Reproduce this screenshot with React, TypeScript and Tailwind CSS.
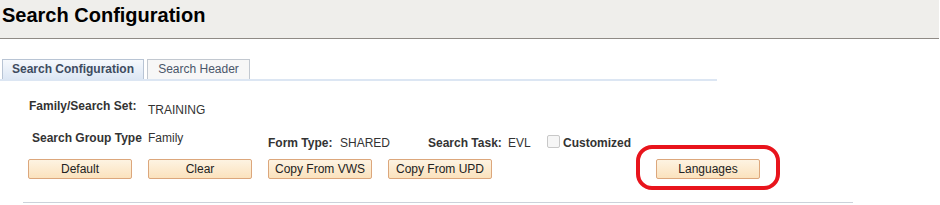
import React from "react";

const font = { fontFamily: '"Liberation Sans", Arial, sans-serif' };

function Btn({ children }: { children: React.ReactNode }) {
  return (
    <button className="w-[104px] h-[20px] rounded-[2px] border border-[#dca77c] bg-gradient-to-b from-[#fdf3e2] to-[#fbe2bd] text-[12px] leading-[18px] text-[#222] text-center">
      {children}
    </button>
  );
}

export default function App() {
  return (
    <div style={font} className="w-[940px] h-[205px] bg-white overflow-hidden text-[#333]">
      <div className="h-[39px] bg-[#efeeeb] border-b border-[#8f8a85] w-[939px]">
        <div className="pl-[2px] pt-[4px] text-[20px] leading-[23px] font-bold text-black">Search Configuration</div>
      </div>
      <div className="mt-[20px] ml-0 w-[717px] border-b-[2px] border-[#dce6f3] flex items-end pl-[2px] gap-[3px]">
        <div className="w-[142px] h-[20px] border border-b-0 border-[#b8c4d4] bg-gradient-to-b from-[#f6f9fd] to-[#dde7f4] text-[12px] leading-[19px] font-bold text-[#3e4c5f] text-center">
          Search Configuration
        </div>
        <div className="w-[103px] h-[20px] border border-b-0 border-[#c2c8d0] bg-[#f7f7f7] text-[12px] leading-[19px] text-[#4a5669] text-center">
          Search Header
        </div>
      </div>
      <div className="pl-[29px] pt-[18px] text-[12px] leading-[14px]">
        <div className="flex">
          <div className="w-[119px] font-bold text-[#333]">Family/Search Set:</div>
          <div className="pt-[4px] text-[#333]">TRAINING</div>
        </div>
        <div className="flex mt-[14px]">
          <div className="w-[119px] pl-[3px] font-bold">Search Group Type</div>
          <div className="w-[120px]">Family</div>
          <div className="flex pt-[5px]">
            <div className="w-[72px] font-bold">Form Type:</div>
            <div className="w-[88px]">SHARED</div>
            <div className="w-[80px] font-bold">Search Task:</div>
            <div className="w-[39px]">EVL</div>
            <div className="flex items-center -mt-[4px]">
              <span className="w-[13px] h-[13px] border border-[#c8c8c8] rounded-[2px] bg-[#f6f6f6]" />
              <span className="ml-[3px] mt-[4px] font-bold text-[12px]">Customized</span>
            </div>
          </div>
        </div>
        <div className="flex mt-[9px] -ml-[1px]">
          <div className="w-[120px]"><Btn>Default</Btn></div>
          <div className="w-[120px]"><Btn>Clear</Btn></div>
          <div className="w-[120px]"><Btn>Copy From VWS</Btn></div>
          <div className="w-[268px]"><Btn>Copy From UPD</Btn></div>
          <div className="relative">
            <Btn>Languages</Btn>
            <div className="absolute left-[-20px] top-[-14px] w-[144px] h-[45px] border-[4px] border-[#e8141c] rounded-[16px]" />
          </div>
        </div>
      </div>
      <div className="ml-[23px] mt-[23px] w-[830px] border-t border-[#ccd2da]" />
    </div>
  );
}
